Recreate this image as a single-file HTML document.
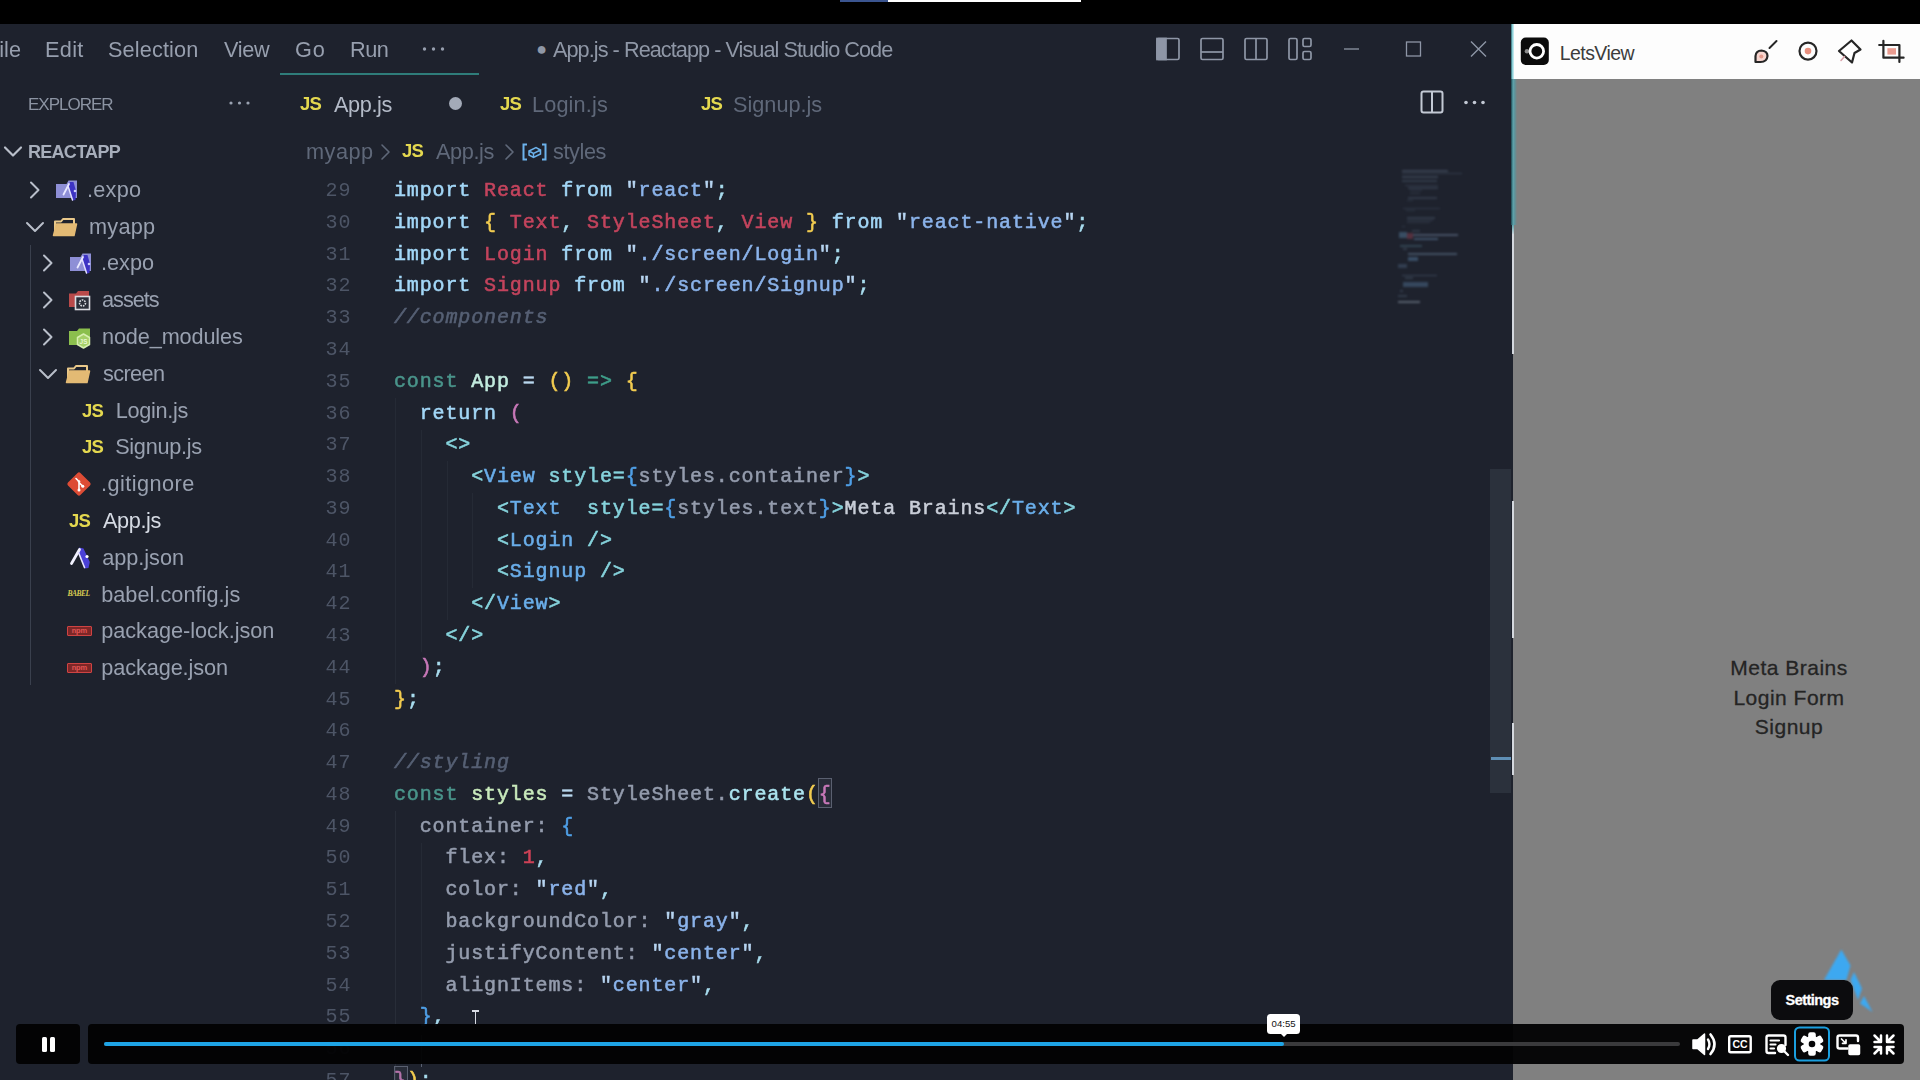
<!DOCTYPE html>
<html lang="en">
<head>
<meta charset="utf-8">
<title>App.js - Reactapp - Visual Studio Code</title>
<style>
*{box-sizing:border-box;margin:0;padding:0}
html,body{width:1920px;height:1080px;overflow:hidden;background:#1e222d}
body{position:relative;font-family:"Liberation Sans",sans-serif;color:#9aa2b1}
.abs{position:absolute}
#topbar{left:0;top:0;width:1920px;height:24px;background:#000}
#vsc{left:0;top:0;width:1512px;height:1080px;background:#1e222d;overflow:hidden}
.ui{position:absolute;white-space:pre;font-size:21.7px;line-height:36px;height:36px;color:#979fae}
.menu{top:31.6px}
.ln{position:absolute;left:290px;width:61.35px;text-align:right;font-family:"Liberation Mono",monospace;font-size:20px;letter-spacing:0.87px;line-height:31.78px;height:31.78px;color:#4d5566;white-space:pre}
.cl{position:absolute;left:394px;font-family:"Liberation Mono",monospace;font-size:20px;line-height:31.78px;height:31.78px;white-space:pre;color:#a9b1c2;letter-spacing:0.87px;-webkit-text-stroke:0.55px}
.cl span{font-weight:normal}
.js{position:absolute;font-weight:bold;color:#e4d84f;font-size:18.5px;line-height:36px;height:36px;letter-spacing:-0.9px}
.row{color:#99a1b0}
.chev{position:absolute;fill:none;stroke:#b9bfca;stroke-width:2;stroke-linecap:round;stroke-linejoin:round}
.cl,.ln,.ui,.js{filter:blur(0.35px)}
</style>
</head>
<body>
<div id="vsc" class="abs">
<!-- title bar menu -->
<div class="ui menu" id="m_file" style="left:-14.00px;letter-spacing:0.000px">File</div>
<div class="ui menu" id="m_edit" style="left:45.00px;letter-spacing:0.333px">Edit</div>
<div class="ui menu" id="m_sel" style="left:108.00px;letter-spacing:0.125px">Selection</div>
<div class="ui menu" id="m_view" style="left:224.00px;letter-spacing:-0.333px">View</div>
<div class="ui menu" id="m_go" style="left:295.00px;letter-spacing:1.000px">Go</div>
<div class="ui menu" id="m_run" style="left:350.00px;letter-spacing:-0.500px">Run</div>
<svg class="abs" style="left:420px;top:44px" width="28" height="10"><g fill="#979fae"><circle cx="4.5" cy="5" r="1.7"/><circle cx="13.5" cy="5" r="1.7"/><circle cx="22.5" cy="5" r="1.7"/></g></svg>
<div class="abs" id="bullet" style="left:536.2px;top:38px;font-size:18px;line-height:22px;color:#8f97a6">●</div>
<div class="ui menu" id="m_title" style="left:553.00px;color:#8f97a6;letter-spacing:-0.958px">App.js - Reactapp - Visual Studio Code</div>
<!-- window / layout controls -->
<svg class="abs" style="left:1150px;top:32px" width="345" height="34" fill="none" stroke="#8e96a6" stroke-width="1.7">
 <rect x="7" y="6.5" width="22" height="21" rx="1.5"/><rect x="7" y="6.5" width="9" height="21" fill="#8e96a6"/>
 <rect x="51" y="6.5" width="22" height="21" rx="1.5"/><line x1="51" y1="20" x2="73" y2="20"/>
 <rect x="95" y="6.5" width="22" height="21" rx="1.5"/><line x1="106" y1="6.5" x2="106" y2="27.5"/>
 <rect x="139" y="6.5" width="8" height="21" rx="1.5"/><rect x="153" y="6.5" width="8" height="8" rx="1.5"/><rect x="153" y="19.5" width="8" height="8" rx="1.5"/>
 <line x1="194" y1="17" x2="209" y2="17" stroke-width="1.3"/>
 <rect x="256.5" y="10" width="14" height="14" stroke-width="1.3"/>
 <path d="M321 9.500 L336 24.500 M336 9.500 L321 24.500" stroke-width="1.4"/>
</svg>
<!-- active tab top border -->
<div class="abs" style="left:280px;top:73px;width:199px;height:2px;background:#2f7d7a"></div>
<!-- explorer header -->
<div class="ui" id="x_expl" style="left:28.00px;top:86.7px;font-size:17px;color:#8c94a3;letter-spacing:-1.000px">EXPLORER</div>
<svg class="abs" style="left:226px;top:98px" width="28" height="10"><g fill="#9aa2b1"><circle cx="5" cy="5" r="1.6"/><circle cx="13.500" cy="5" r="1.6"/><circle cx="22" cy="5" r="1.6"/></g></svg>
<!-- tabs -->
<div class="js" id="tj1" style="left:300px;top:86px">JS</div>
<div class="ui" id="tab1" style="top:86.6px;left:334.00px;color:#b4bbc8;letter-spacing:-0.400px">App.js</div>
<div class="abs" style="left:448.500px;top:96.500px;width:13px;height:13px;border-radius:50%;background:#a3aab8"></div>
<div class="js" id="tj2" style="left:500px;top:86px">JS</div>
<div class="ui" id="tab2" style="top:86.6px;left:532.00px;color:#5f6879;letter-spacing:0.143px">Login.js</div>
<div class="js" id="tj3" style="left:701px;top:86px">JS</div>
<div class="ui" id="tab3" style="top:86.6px;left:733.00px;color:#5f6879;letter-spacing:0.000px">Signup.js</div>
<svg class="abs" style="left:1416px;top:86px" width="76" height="32" fill="none" stroke="#c3c9d4" stroke-width="2">
 <rect x="5.500" y="5.500" width="21" height="21" rx="2"/><line x1="16" y1="5.500" x2="16" y2="26.500"/>
 <g fill="#c3c9d4" stroke="none"><circle cx="50" cy="16.500" r="1.8"/><circle cx="58.500" cy="16.500" r="1.8"/><circle cx="67" cy="16.500" r="1.8"/></g>
</svg>
<!-- breadcrumbs -->
<div class="ui" id="bc1" style="left:306.00px;top:134px;color:#5f6879;letter-spacing:0.500px">myapp</div>
<svg class="chev" style="left:379px;top:142px;stroke:#5f6879;stroke-width:1.6" width="14" height="20"><path d="M3 3 L10 10 L3 17"/></svg>
<div class="js" id="bj" style="left:402px;top:133px">JS</div>
<div class="ui" id="bc2" style="left:436.00px;top:134px;color:#5f6879;letter-spacing:-0.400px">App.js</div>
<svg class="chev" style="left:503px;top:142px;stroke:#5f6879;stroke-width:1.6" width="14" height="20"><path d="M3 3 L10 10 L3 17"/></svg>
<svg class="abs" style="left:521px;top:142px" width="28" height="20" fill="none" stroke="#6cb2ec" stroke-width="2"><path d="M6 2.500 H2.500 V17.500 H6 M21 2.500 H24.500 V17.500 H21"/><path d="M8 9 L15 5.500 L19.500 8 L19.500 12 L12.500 15.500 L8 13 Z M8 9 L12.500 11.500 L19.500 8 M12.500 11.500 V15.500" stroke-width="1.5"/></svg>
<div class="ui" id="bc3" style="left:553.00px;top:134px;color:#5f6879;letter-spacing:-0.400px">styles</div>

<!-- scrollbar slider -->
<div class="abs" style="left:1490px;top:469px;width:21px;height:324px;background:#2b313c"></div>
<div class="abs" style="left:1491px;top:756.5px;width:20px;height:3px;background:#5f8fb5"></div>
<!-- bracket match -->
<div class="abs" style="left:818px;top:778px;width:13.5px;height:30px;border:1px solid #5a6070;background:rgba(90,96,112,.18)"></div>
<!-- indent guides -->
<div class="abs" style="left:395px;top:811px;width:1px;height:269px;background:#282d38"></div>
<div class="abs" style="left:421px;top:1035px;width:1px;height:32px;background:#596172"></div>
<div class="abs" style="left:421px;top:843px;width:1px;height:159px;background:#252a35"></div>
<div class="abs" style="left:395px;top:398px;width:1px;height:286px;background:#252a35"></div>
<div class="abs" style="left:421px;top:430px;width:1px;height:222px;background:#252a35"></div>
<div class="abs" style="left:446.500px;top:461px;width:1px;height:159px;background:#252a35"></div>
<div class="abs" style="left:472px;top:493px;width:1px;height:95px;background:#252a35"></div>
<svg class="chev" style="left:1px;top:143px;stroke-width:2.200" width="24" height="18"><path d="M4 4.500 L12 12.500 L20 4.500"/></svg>
<div class="ui" id="s_root" style="left:28.00px;top:134px;font-size:18px;font-weight:bold;color:#a7aebb;letter-spacing:-0.714px">REACTAPP</div>
<svg class="chev" style="left:27px;top:178.8px" width="18" height="22"><path d="M4 3.500 L11.500 11 L4 18.500"/></svg>
<svg class="abs" style="left:54px;top:177.8px" width="26" height="26"><path d="M2 6 H12.500 L14.500 2.500 H23 V20 H2 Z" fill="#8e8fd6"/><path d="M15.800 4 L19.500 4 L22 13 L21.500 22 L18.500 22.500 L14 9 Z" fill="#3d33c4"/><path d="M9.500 16.500 L15 6" fill="none" stroke="#e9e9ff" stroke-width="1.800" stroke-linecap="round"/><path d="M14 8 L18.500 22" fill="none" stroke="#e4e2ff" stroke-width="1.500" stroke-linecap="round"/><circle cx="21" cy="13" r="1.300" fill="#cfd0ff"/></svg>
<div class="ui row" id="s0" style="left:87.00px;top:171.8px;color:#99a1b0;letter-spacing:0.250px">.expo</div>
<svg class="chev" style="left:23px;top:217.6px" width="24" height="18"><path d="M4 5 L12 13 L20 5"/></svg>
<svg class="abs" style="left:51px;top:214.6px" width="28" height="24"><path d="M4 20 V6.500 H10 L12 4 H23 V9" fill="none" stroke="#e9c88a" stroke-width="2" stroke-linejoin="round"/><path d="M5.500 9 H25.500 L23 20.500 H2.500 Z" fill="#e3ba74" stroke="#e3ba74" stroke-width="1.5" stroke-linejoin="round"/></svg>
<div class="ui row" id="s1" style="left:89.00px;top:208.6px;color:#99a1b0;letter-spacing:0.250px">myapp</div>
<svg class="chev" style="left:40px;top:252.4px" width="18" height="22"><path d="M4 3.500 L11.500 11 L4 18.500"/></svg>
<svg class="abs" style="left:68px;top:251.4px" width="26" height="26"><path d="M2 6 H12.500 L14.500 2.500 H23 V20 H2 Z" fill="#8e8fd6"/><path d="M15.800 4 L19.500 4 L22 13 L21.500 22 L18.500 22.500 L14 9 Z" fill="#3d33c4"/><path d="M9.500 16.500 L15 6" fill="none" stroke="#e9e9ff" stroke-width="1.800" stroke-linecap="round"/><path d="M14 8 L18.500 22" fill="none" stroke="#e4e2ff" stroke-width="1.500" stroke-linecap="round"/><circle cx="21" cy="13" r="1.300" fill="#cfd0ff"/></svg>
<div class="ui row" id="s2" style="left:101.00px;top:245.4px;color:#99a1b0;letter-spacing:0.000px">.expo</div>
<svg class="chev" style="left:40px;top:289.2px" width="18" height="22"><path d="M4 3.500 L11.500 11 L4 18.500"/></svg>
<svg class="abs" style="left:68px;top:288.2px" width="26" height="24"><path d="M1 5.500 H8 L10 3 H21 V19 H1 Z" fill="#b94a4a"/><rect x="7.500" y="8.500" width="14" height="13" fill="#2a2e39" stroke="#d9dbe0" stroke-width="1.6"/><circle cx="14.500" cy="15" r="3" fill="none" stroke="#d9dbe0" stroke-width="1.6" stroke-dasharray="1.6 1"/></svg>
<div class="ui row" id="s3" style="left:102.00px;top:282.2px;color:#99a1b0;letter-spacing:-1.000px">assets</div>
<svg class="chev" style="left:40px;top:326.0px" width="18" height="22"><path d="M4 3.500 L11.500 11 L4 18.500"/></svg>
<svg class="abs" style="left:68px;top:325.0px" width="26" height="26"><path d="M1 6 H9 L11 3.500 H22 V20 H1 Z" fill="#8bbf4d"/><path d="M15.500 9 L21.500 12.500 V19.500 L15.500 23 L9.500 19.500 V12.500 Z" fill="#a5d068" stroke="#d7efb0" stroke-width="1.5" stroke-linejoin="round"/><text x="15.500" y="19" font-family="Liberation Sans,sans-serif" font-size="6.500" font-weight="bold" fill="#e8f6d0" text-anchor="middle">JS</text></svg>
<div class="ui row" id="s4" style="left:102.00px;top:319.0px;color:#99a1b0;letter-spacing:-0.136px">node_modules</div>
<svg class="chev" style="left:36px;top:364.8px" width="24" height="18"><path d="M4 5 L12 13 L20 5"/></svg>
<svg class="abs" style="left:64px;top:361.8px" width="28" height="24"><path d="M4 20 V6.500 H10 L12 4 H23 V9" fill="none" stroke="#e9c88a" stroke-width="2" stroke-linejoin="round"/><path d="M5.500 9 H25.500 L23 20.500 H2.500 Z" fill="#e3ba74" stroke="#e3ba74" stroke-width="1.5" stroke-linejoin="round"/></svg>
<div class="ui row" id="s5" style="left:103.00px;top:355.8px;color:#99a1b0;letter-spacing:-0.600px">screen</div>
<div class="js" style="left:82px;top:392.6px">JS</div>
<div class="ui row" id="s6" style="left:115.80px;top:392.6px;color:#99a1b0;letter-spacing:-0.329px">Login.js</div>
<div class="js" style="left:82px;top:429.4px">JS</div>
<div class="ui row" id="s7" style="left:115.20px;top:429.4px;color:#99a1b0;letter-spacing:-0.300px">Signup.js</div>
<svg class="abs" style="left:66px;top:471.2px" width="26" height="26"><rect x="4.200" y="4.200" width="17.600" height="17.600" rx="2" transform="rotate(45 13 13)" fill="#dd4c35"/><path d="M10 7.500 L13 10.500 V19 M13 11.500 L16.500 15" fill="none" stroke="#fff" stroke-width="1.6" stroke-linecap="round"/><circle cx="13" cy="19" r="1.500" fill="#fff"/><circle cx="16.800" cy="15.300" r="1.500" fill="#fff"/><circle cx="13" cy="10.500" r="1.300" fill="#fff"/></svg>
<div class="ui row" id="s8" style="left:101.00px;top:466.2px;color:#99a1b0;letter-spacing:0.444px">.gitignore</div>
<div class="js" style="left:69px;top:503.0px">JS</div>
<div class="ui row" id="s9" style="left:103.00px;top:503.0px;color:#d5dae3;letter-spacing:-0.400px">App.js</div>
<svg class="abs" style="left:67.5px;top:544.8px" width="28" height="26"><path d="M11 2.500 L15.500 3.500 L21.800 17 L20.500 23 L16.500 23.500 L10.500 8 Z" fill="#4a40d6"/><path d="M3.500 18.500 L11.500 4.500" fill="none" stroke="#f2f2ff" stroke-width="2.800" stroke-linecap="round"/><path d="M10.500 7.500 L16.500 22.500" fill="none" stroke="#e6e4ff" stroke-width="1.600" stroke-linecap="round"/><circle cx="19" cy="11.500" r="1.600" fill="#fff"/></svg>
<div class="ui row" id="s10" style="left:102.20px;top:539.8px;color:#99a1b0;letter-spacing:-0.029px">app.json</div>
<div class="abs" style="left:67.5px;top:586.6px;font-size:7.500px;line-height:14px;font-style:italic;font-weight:bold;color:#d6ca52;letter-spacing:-0.500px;font-family:'Liberation Serif',serif">BABEL</div>
<div class="ui row" id="s11" style="left:101.20px;top:576.6px;color:#99a1b0;letter-spacing:0.029px">babel.config.js</div>
<div class="abs" style="left:67px;top:626.4px;width:24.500px;height:10px;background:#7d2727;border:1.500px solid #cf4343;border-radius:1px;font-size:7.500px;line-height:7.200px;font-weight:bold;color:#e25555;text-align:center;letter-spacing:-0.200px">npm</div>
<div class="ui row" id="s12" style="left:101.20px;top:613.4px;color:#99a1b0;letter-spacing:-0.025px">package-lock.json</div>
<div class="abs" style="left:67px;top:663.2px;width:24.500px;height:10px;background:#7d2727;border:1.500px solid #cf4343;border-radius:1px;font-size:7.500px;line-height:7.200px;font-weight:bold;color:#e25555;text-align:center;letter-spacing:-0.200px">npm</div>
<div class="ui row" id="s13" style="left:101.20px;top:650.2px;color:#99a1b0;letter-spacing:-0.082px">package.json</div>
<div class="abs" style="left:29.500px;top:245px;width:1px;height:440px;background:#3a404d"></div><div class="abs" style="left:1380px;top:150px;width:130px;height:180px;filter:blur(0.8px);opacity:.6">
<div class="abs" style="left:21.7px;top:20.3px;width:46.7px;height:1.9px;background:#4a5668"></div>
<div class="abs" style="left:21.7px;top:22.8px;width:60.0px;height:1.4px;background:#434f61"></div>
<div class="abs" style="left:21.7px;top:26.1px;width:36.7px;height:1.9px;background:#465265"></div>
<div class="abs" style="left:21.7px;top:30.3px;width:35.0px;height:1.9px;background:#3f4a5c"></div>
<div class="abs" style="left:25.0px;top:34.5px;width:33.3px;height:1.9px;background:#3f4a5c"></div>
<div class="abs" style="left:28.3px;top:37.0px;width:30.0px;height:1.9px;background:#3d4859"></div>
<div class="abs" style="left:30.0px;top:39.5px;width:11.7px;height:1.9px;background:#3b4656"></div>
<div class="abs" style="left:30.0px;top:42.8px;width:10.0px;height:1.4px;background:#3b4656"></div>
<div class="abs" style="left:28.3px;top:47.0px;width:28.3px;height:1.9px;background:#3d4859"></div>
<div class="abs" style="left:26.7px;top:49.5px;width:6.7px;height:1.4px;background:#394453"></div>
<div class="abs" style="left:23.3px;top:57.8px;width:36.7px;height:1.4px;background:#3d4859"></div>
<div class="abs" style="left:25.8px;top:59.8px;width:9.2px;height:1.6px;background:#394453"></div>
<div class="abs" style="left:26.7px;top:67.0px;width:28.3px;height:1.9px;background:#3f4a5c"></div>
<div class="abs" style="left:26.7px;top:69.5px;width:26.7px;height:1.9px;background:#3f4a5c"></div>
<div class="abs" style="left:26.7px;top:72.0px;width:23.3px;height:1.4px;background:#3b4656"></div>
<div class="abs" style="left:21.7px;top:76.1px;width:3.3px;height:1.4px;background:#3b4656"></div>
<div class="abs" style="left:31.7px;top:80.3px;width:8.3px;height:2.0px;background:#3b4656"></div>
<div class="abs" style="left:19.2px;top:82.3px;width:7.5px;height:6.2px;background:#4b6a86"></div>
<div class="abs" style="left:26.7px;top:82.8px;width:6.7px;height:5.8px;background:#7a3a4a"></div>
<div class="abs" style="left:33.3px;top:84.1px;width:45.0px;height:1.9px;background:#62708a"></div>
<div class="abs" style="left:34.2px;top:87.6px;width:24.2px;height:2.0px;background:#56708f"></div>
<div class="abs" style="left:20.0px;top:95.3px;width:21.7px;height:1.9px;background:#3f5a6a"></div>
<div class="abs" style="left:23.3px;top:97.8px;width:3.3px;height:1.9px;background:#3f4a5c"></div>
<div class="abs" style="left:28.3px;top:103.3px;width:48.3px;height:2.0px;background:#5b6f88"></div>
<div class="abs" style="left:28.3px;top:107.0px;width:10.0px;height:3.7px;background:#4b6a8a"></div>
<div class="abs" style="left:18.3px;top:113.6px;width:8.3px;height:4.7px;background:#3f5068"></div>
<div class="abs" style="left:21.7px;top:124.5px;width:35.0px;height:1.9px;background:#4a5a70"></div>
<div class="abs" style="left:25.0px;top:127.0px;width:8.3px;height:2.0px;background:#3f4a5c"></div>
<div class="abs" style="left:23.3px;top:132.0px;width:25.0px;height:4.7px;background:#46607d"></div>
<div class="abs" style="left:20.0px;top:140.3px;width:3.3px;height:2.0px;background:#3f4a5c"></div>
<div class="abs" style="left:18.3px;top:145.3px;width:8.3px;height:2.0px;background:#3f4a5c"></div>
<div class="abs" style="left:18.3px;top:151.1px;width:21.7px;height:1.9px;background:#7c8696"></div>
</div>
<div class="ln" style="top:175.11px">29</div>
<div class="cl" style="top:175.11px"><span style="color:#a3d7f7">import </span><span style="color:#c4445d">React </span><span style="color:#a3d7f7">from </span><span style="color:#b7d4f0">"</span><span style="color:#8bb3ea">react</span><span style="color:#b7d4f0">"</span><span style="color:#a8dcee">;</span></div>
<div class="ln" style="top:206.89px">30</div>
<div class="cl" style="top:206.89px"><span style="color:#a3d7f7">import </span><span style="color:#f2cc50">{ </span><span style="color:#c4445d">Text</span><span style="color:#a8dcee">, </span><span style="color:#c4445d">StyleSheet</span><span style="color:#a8dcee">, </span><span style="color:#c4445d">View </span><span style="color:#f2cc50">} </span><span style="color:#a3d7f7">from </span><span style="color:#b7d4f0">"</span><span style="color:#8bb3ea">react-native</span><span style="color:#b7d4f0">"</span><span style="color:#a8dcee">;</span></div>
<div class="ln" style="top:238.67px">31</div>
<div class="cl" style="top:238.67px"><span style="color:#a3d7f7">import </span><span style="color:#c4445d">Login </span><span style="color:#a3d7f7">from </span><span style="color:#b7d4f0">"</span><span style="color:#8bb3ea">./screen/Login</span><span style="color:#b7d4f0">"</span><span style="color:#a8dcee">;</span></div>
<div class="ln" style="top:270.45px">32</div>
<div class="cl" style="top:270.45px"><span style="color:#a3d7f7">import </span><span style="color:#c4445d">Signup </span><span style="color:#a3d7f7">from </span><span style="color:#b7d4f0">"</span><span style="color:#8bb3ea">./screen/Signup</span><span style="color:#b7d4f0">"</span><span style="color:#a8dcee">;</span></div>
<div class="ln" style="top:302.23px">33</div>
<div class="cl" style="top:302.23px"><span style="color:#566074;font-style:italic">//components</span></div>
<div class="ln" style="top:334.01px">34</div>
<div class="ln" style="top:365.79px">35</div>
<div class="cl" style="top:365.79px"><span style="color:#4a958b">const </span><span style="color:#c3ecdf">App </span><span style="color:#b9d7ee">= </span><span style="color:#f2cc50">() </span><span style="color:#3f9e8a">=&gt; </span><span style="color:#f2cc50">{</span></div>
<div class="ln" style="top:397.57px">36</div>
<div class="cl" style="top:397.57px">  <span style="color:#a3d7f7">return </span><span style="color:#c878b8">(</span></div>
<div class="ln" style="top:429.35px">37</div>
<div class="cl" style="top:429.35px">    <span style="color:#86d3dc">&lt;&gt;</span></div>
<div class="ln" style="top:461.13px">38</div>
<div class="cl" style="top:461.13px">      <span style="color:#86d3dc">&lt;</span><span style="color:#6aaeea">View </span><span style="color:#86d3dc">style=</span><span style="color:#4f9fe6">{</span><span style="color:#949cad">styles.container</span><span style="color:#4f9fe6">}</span><span style="color:#86d3dc">&gt;</span></div>
<div class="ln" style="top:492.91px">39</div>
<div class="cl" style="top:492.91px">        <span style="color:#86d3dc">&lt;</span><span style="color:#6aaeea">Text  </span><span style="color:#86d3dc">style=</span><span style="color:#4f9fe6">{</span><span style="color:#949cad">styles.text</span><span style="color:#4f9fe6">}</span><span style="color:#86d3dc">&gt;</span><span style="color:#c9ced8">Meta Brains</span><span style="color:#86d3dc">&lt;/</span><span style="color:#6aaeea">Text</span><span style="color:#86d3dc">&gt;</span></div>
<div class="ln" style="top:524.69px">40</div>
<div class="cl" style="top:524.69px">        <span style="color:#86d3dc">&lt;</span><span style="color:#6aaeea">Login </span><span style="color:#86d3dc">/&gt;</span></div>
<div class="ln" style="top:556.47px">41</div>
<div class="cl" style="top:556.47px">        <span style="color:#86d3dc">&lt;</span><span style="color:#6aaeea">Signup </span><span style="color:#86d3dc">/&gt;</span></div>
<div class="ln" style="top:588.25px">42</div>
<div class="cl" style="top:588.25px">      <span style="color:#86d3dc">&lt;/</span><span style="color:#6aaeea">View</span><span style="color:#86d3dc">&gt;</span></div>
<div class="ln" style="top:620.03px">43</div>
<div class="cl" style="top:620.03px">    <span style="color:#86d3dc">&lt;/&gt;</span></div>
<div class="ln" style="top:651.81px">44</div>
<div class="cl" style="top:651.81px">  <span style="color:#c878b8">)</span><span style="color:#a8dcee">;</span></div>
<div class="ln" style="top:683.59px">45</div>
<div class="cl" style="top:683.59px"><span style="color:#f2cc50">}</span><span style="color:#a8dcee">;</span></div>
<div class="ln" style="top:715.37px">46</div>
<div class="ln" style="top:747.15px">47</div>
<div class="cl" style="top:747.15px"><span style="color:#566074;font-style:italic">//styling</span></div>
<div class="ln" style="top:778.93px">48</div>
<div class="cl" style="top:778.93px"><span style="color:#4a958b">const </span><span style="color:#c9eabc">styles </span><span style="color:#b9d7ee">= </span><span style="color:#949cad">StyleSheet.</span><span style="color:#abe3ee">create</span><span style="color:#f2cc50">(</span><span style="color:#c878b8">{</span></div>
<div class="ln" style="top:810.71px">49</div>
<div class="cl" style="top:810.71px">  <span style="color:#949cad">container: </span><span style="color:#4f9fe6">{</span></div>
<div class="ln" style="top:842.49px">50</div>
<div class="cl" style="top:842.49px">    <span style="color:#949cad">flex: </span><span style="color:#cf4257">1</span><span style="color:#a8dcee">,</span></div>
<div class="ln" style="top:874.27px">51</div>
<div class="cl" style="top:874.27px">    <span style="color:#949cad">color: </span><span style="color:#b7d4f0">"</span><span style="color:#8bb3ea">red</span><span style="color:#b7d4f0">"</span><span style="color:#a8dcee">,</span></div>
<div class="ln" style="top:906.05px">52</div>
<div class="cl" style="top:906.05px">    <span style="color:#949cad">backgroundColor: </span><span style="color:#b7d4f0">"</span><span style="color:#8bb3ea">gray</span><span style="color:#b7d4f0">"</span><span style="color:#a8dcee">,</span></div>
<div class="ln" style="top:937.83px">53</div>
<div class="cl" style="top:937.83px">    <span style="color:#949cad">justifyContent: </span><span style="color:#b7d4f0">"</span><span style="color:#8bb3ea">center</span><span style="color:#b7d4f0">"</span><span style="color:#a8dcee">,</span></div>
<div class="ln" style="top:969.61px">54</div>
<div class="cl" style="top:969.61px">    <span style="color:#949cad">alignItems: </span><span style="color:#b7d4f0">"</span><span style="color:#8bb3ea">center</span><span style="color:#b7d4f0">"</span><span style="color:#a8dcee">,</span></div>
<div class="ln" style="top:1001.39px">55</div>
<div class="cl" style="top:1001.39px">  <span style="color:#4f9fe6">}</span><span style="color:#a8dcee">,</span></div>
<div class="ln" style="top:1033.17px">56</div>
<div class="ln" style="top:1064.95px">57</div>
<div class="cl" style="top:1064.95px"><span style="color:#c878b8">}</span><span style="color:#f2cc50">)</span><span style="color:#a8dcee">;</span></div>
</div>
<div class="abs" id="phone" style="left:1513px;top:24px;width:407px;height:1056px;background:#808080"></div>
<div class="abs" style="left:1513.5px;top:24px;width:407px;height:55px;background:#fdfdfd"></div>
<!-- window edge lines -->
<div class="abs" style="left:1510.5px;top:24px;width:3.5px;height:55px;background:linear-gradient(90deg,#2f6a74,#8fd0d8 50%,#d4f2f5)"></div>
<div class="abs" style="left:1510.5px;top:79px;width:6px;height:146px;background:linear-gradient(90deg,#1b4450 0,#5fa5ad 35%,#5f9299 65%,#808080 100%)"></div>
<div class="abs" style="left:1511.5px;top:225px;width:2px;height:10px;background:linear-gradient(#5fa5ad,#d4d8de)"></div>
<div class="abs" style="left:1511.500px;top:234px;width:2px;height:120px;background:#d4d8de"></div>
<div class="abs" style="left:1511.500px;top:501px;width:2px;height:137px;background:#d4d8de"></div>
<div class="abs" style="left:1511.500px;top:723px;width:2px;height:52px;background:#d4d8de"></div>
<!-- LetsView logo -->
<svg class="abs" style="left:1520px;top:37px" width="30" height="29"><rect x="0.800" y="0.500" width="28" height="27.500" rx="5" fill="#0b0b0b"/><circle cx="7" cy="14.300" r="2.300" fill="#8a8a8a"/><circle cx="16.800" cy="14.300" r="6.800" fill="#0b0b0b" stroke="#fff" stroke-width="2.800"/></svg>
<div class="abs" id="lv" style="left:1559.80px;top:38px;font-size:19.500px;line-height:30px;color:#3c3c3c;white-space:pre;letter-spacing:-0.571px">LetsView</div>
<svg class="abs" style="left:1750px;top:36px" width="160" height="32" fill="none" stroke="#262626" stroke-width="2.200" stroke-linecap="round" stroke-linejoin="round">
 <path d="M5.500 26 L5.500 20 Q6 14.500 11.500 14.500 Q17.500 15 17.500 20 Q17 26 10.500 26 Z" fill="#f6d5cf"/>
 <circle cx="11.300" cy="20.500" r="2" fill="#e59a8c" stroke="none"/>
 <path d="M19.500 12 L26.500 5" stroke-width="2"/>
 <circle cx="58" cy="15.100" r="8.500"/><circle cx="58" cy="15.100" r="3.300" fill="#e8907f" stroke="none"/>
 <path d="M89 15 L101.500 4.500 L110.500 13.500 L104.500 17 L102 26.500 Z" fill="#fff"/>
 <path d="M94.500 20.500 L91 24.500" stroke="#d9a0a8" stroke-width="1.500"/>
 <path d="M133.400 4.800 V21.700 H153.600 M129.200 9 H149.400 V25.900" />
 <rect x="137.400" y="12.200" width="8.600" height="6.400" fill="#ea9c90" stroke="none"/>
</svg>
<!-- phone text -->
<div class="abs" id="ph1" style="left:1640px;width:298px;top:653px;text-align:center;font-size:21px;line-height:29.500px;color:#242424;white-space:pre;letter-spacing:0.5px;-webkit-text-stroke:0.3px">Meta Brains</div>
<div class="abs" id="ph2" style="left:1640px;width:298px;top:682.500px;text-align:center;font-size:21px;line-height:29.500px;color:#242424;white-space:pre;letter-spacing:0.5px;-webkit-text-stroke:0.3px">Login Form</div>
<div class="abs" id="ph3" style="left:1640px;width:298px;top:712px;text-align:center;font-size:21px;line-height:29.500px;color:#242424;white-space:pre;letter-spacing:0.5px;-webkit-text-stroke:0.3px">Signup</div>
<!-- watermark logo -->
<svg class="abs" style="left:1815px;top:944px;filter:blur(0.8px)" width="70" height="82" fill="#3da8f0">
 <path d="M26.300 5.500 L35.500 21.500 L31.500 36 L9 36 Z"/>
 <path d="M-22 76 L-8 76 L-4 80 L-26 80 Z" opacity=".35"/>
 <path d="M39 28 L47 44.500 L43 56 L35.500 36 Z"/>
 <path d="M49 52 L57.500 68 L45 59.500 Z"/>
</svg>

<div id="topbar" class="abs"></div>
<div class="abs" style="left:840px;top:0;width:48px;height:1.5px;background:#3b5590"></div>
<div class="abs" style="left:888px;top:0;width:193px;height:1.5px;background:#fff"></div>
<!-- I-beam cursor -->
<div class="abs" style="left:474.500px;top:1010px;width:1.500px;height:14px;background:#d8dce4"></div>
<div class="abs" style="left:471.500px;top:1010px;width:7.500px;height:1.500px;background:#d8dce4"></div>
<div class="abs" style="left:394px;top:1066px;width:13.5px;height:20px;border:1px solid #5a6070;background:rgba(90,96,112,.18)"></div>
<!-- video controls -->
<div class="abs" style="left:16px;top:1024px;width:64px;height:39.500px;border-radius:4px;background:rgba(2,2,3,.96)"></div>
<div class="abs" style="left:41.500px;top:1036.500px;width:5px;height:15.500px;border-radius:1.500px;background:#fff"></div>
<div class="abs" style="left:49.800px;top:1036.500px;width:5px;height:15.500px;border-radius:1.500px;background:#fff"></div>
<div class="abs" style="left:88px;top:1024px;width:1816px;height:39.500px;border-radius:4px;background:rgba(2,2,3,.96)"></div>
<div class="abs" style="left:104px;top:1042.1px;width:1576px;height:3.8px;border-radius:2px;background:#3a3a3c"></div>
<div class="abs" style="left:104px;top:1042.1px;width:1180px;height:3.8px;border-radius:2px;background:#1ea4e6"></div>
<!-- time tooltip -->
<div class="abs" id="tt" style="left:1267px;top:1013.8px;width:33.2px;height:20.3px;border-radius:3.5px;background:#fff;color:#111;font-size:9.6px;line-height:19.3px;text-align:center">04:55</div>
<div class="abs" style="left:1280.7px;top:1034px;width:0;height:0;border-left:3.2px solid transparent;border-right:3.2px solid transparent;border-top:3.2px solid #fff"></div>
<!-- settings tooltip -->
<div class="abs" id="st" style="left:1771px;top:980px;width:82px;height:39.500px;border-radius:9px;background:#0c0c0e;color:#fff;font-size:14.500px;font-weight:bold;line-height:41.500px;text-align:center;letter-spacing:-0.550px;-webkit-text-stroke:0.3px">Settings</div>
<!-- icons -->
<svg class="abs" style="left:1686px;top:1026px" width="216" height="36" fill="none" stroke="#fff" stroke-width="2.400" stroke-linecap="round" stroke-linejoin="round">
 <!-- volume -->
 <path d="M7 14 H11.500 L18.500 8 V28.500 L11.500 22.500 H7 Z" fill="#fff" stroke-width="1.500"/>
 <path d="M22 13.500 Q25 18.300 22 23" /><path d="M24.500 8.500 Q32.500 18.300 24.500 28" stroke-width="2.600"/>
 <!-- cc -->
 <rect x="43.200" y="10.200" width="21.500" height="16" rx="1.500" stroke-width="2.400"/>
 <text x="54" y="22.300" font-family="Liberation Sans,sans-serif" font-size="10.500" font-weight="bold" fill="#fff" stroke="none" text-anchor="middle">CC</text>
 <!-- transcript -->
 <path d="M99.500 19 V11.500 Q99.500 9.500 97.500 9.500 H82.500 Q80.500 9.500 80.500 11.500 V25 Q80.500 27 82.500 27 H89"/>
 <path d="M84.500 14.500 H93 M84.500 18.500 H89.500 M84.500 22.500 H88" stroke-width="2.200"/>
 <circle cx="95.500" cy="22.500" r="3.800" fill="#fff" stroke-width="1.600"/><path d="M98.500 25.500 L102 29" stroke-width="2.400"/>
 <!-- settings focus ring -->
 <rect x="109" y="1.400" width="34" height="33.200" rx="4.500" stroke="#1a9fdf" stroke-width="2"/>
 <!-- pip -->
 <path d="M161.500 22.500 H153.500 Q151.500 22.500 151.500 20.500 V11.500 Q151.500 9.500 153.500 9.500 H170 Q172 9.500 172 11.500 V15"/>
 <rect x="163" y="19" width="10.500" height="9.500" rx="1" fill="#fff" stroke-width="1.500"/>
 <path d="M155.500 13 L159.500 17 M160 13.800 V17.300 H156.500" stroke-width="1.700"/>
 <!-- exit fullscreen -->
 <g stroke-width="2.500"><path d="M188.500 9.500 L194 15 M195 9.500 V16 H188.500"/><path d="M207.500 9.500 L202 15 M201 9.500 V16 H207.500"/><path d="M188.500 27.500 L194 22 M195 27.500 V21 H188.500"/><path d="M207.500 27.500 L202 22 M201 27.500 V21 H207.500"/></g>
</svg>
<!-- gear -->
<svg class="abs" style="left:1799px;top:1031px" width="26" height="26" viewBox="-13 -13 26 26">
 <g fill="#fff">
  <circle r="8.200"/>
  <g id="tooth"><rect x="-3.800" y="-11.800" width="7.600" height="8" rx="2.200"/></g>
  <rect x="-3.800" y="-11.800" width="7.600" height="8" rx="2.200" transform="rotate(60)"/>
  <rect x="-3.800" y="-11.800" width="7.600" height="8" rx="2.200" transform="rotate(120)"/>
  <rect x="-3.800" y="-11.800" width="7.600" height="8" rx="2.200" transform="rotate(180)"/>
  <rect x="-3.800" y="-11.800" width="7.600" height="8" rx="2.200" transform="rotate(240)"/>
  <rect x="-3.800" y="-11.800" width="7.600" height="8" rx="2.200" transform="rotate(300)"/>
 </g>
 <circle r="3.300" fill="#050506"/>
</svg>

</body>
</html>
